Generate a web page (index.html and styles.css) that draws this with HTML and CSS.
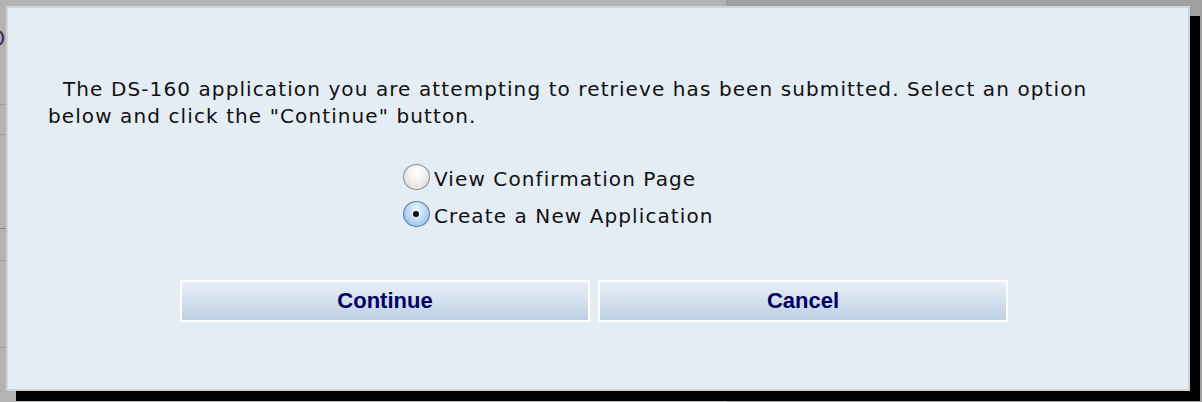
FILE: index.html
```html
<!DOCTYPE html>
<html>
<head>
<meta charset="utf-8">
<link rel="stylesheet" href="styles.css">
</head>
<body>
<div class="page">
  <div class="bg-glyph">O</div>
  <div class="bg-line l1"></div>
  <div class="bg-line l2"></div>
  <div class="bg-line l3"></div>
  <div class="bg-line l4"></div>
  <div class="bg-line l5"></div>
</div>
<div class="dialog">
  <p class="msg">The DS-160 application you are attempting to retrieve has been submitted. Select an option below and click the "Continue" button.</p>
  <div class="options">
    <label class="opt"><input type="radio" name="choice" class="radio"><span>View Confirmation Page</span></label>
    <label class="opt"><input type="radio" name="choice" class="radio" checked><span>Create a New Application</span></label>
  </div>
  <div class="buttons">
    <button class="btn">Continue</button>
    <button class="btn">Cancel</button>
  </div>
</div>
</body>
</html>
```
FILE: styles.css
```css
html, body {
  margin: 0;
  padding: 0;
}
body {
  width: 1202px;
  height: 402px;
  overflow: hidden;
  position: relative;
  background: linear-gradient(to right, #b3b3b3 0, #b3b3b3 726px, #a0a0a0 726px);
  font-family: "DejaVu Sans", Verdana, sans-serif;
}
.page {
  position: absolute;
  left: 0;
  top: 0;
  width: 1202px;
  height: 402px;
}
.bg-glyph {
  position: absolute;
  left: -12px;
  top: 26px;
  font-size: 22px;
  color: #3a3460;
  font-family: "DejaVu Sans", sans-serif;
}
.bg-line {
  position: absolute;
  left: 0;
  width: 6px;
  height: 1px;
  background: #9c9c9c;
}
.l1 { top: 104px; }
.l2 { top: 134px; }
.l3 { top: 228px; background: #888; }
.l4 { top: 260px; }
.l5 { top: 347px; }
.dialog {
  position: absolute;
  left: 6px;
  top: 6px;
  width: 1180px;
  height: 381px;
  border: 2px solid #d3d3d3;
  background: #e4ecf4;
  box-shadow: 10px 10px 0 #000;
}
.msg {
  margin: 0;
  padding: 68px 90px 0 40px;
  font-size: 20px;
  line-height: 27px;
  letter-spacing: 1.1px;
  color: #111;
  text-indent: 15px;
}
.options {
  display: flex;
  flex-direction: column;
  gap: 9px;
  padding: 35px 0 0 395px;
}
.opt {
  display: flex;
  align-items: center;
  height: 28px;
  font-size: 20px;
  letter-spacing: 1.1px;
  color: #111;
}
.radio {
  appearance: none;
  -webkit-appearance: none;
  margin: 0 4px 4px 0;
  width: 27px;
  height: 26px;
  border-radius: 50%;
  border: 1px solid #8e8e8e;
  background: radial-gradient(ellipse at 50% 25%, #ffffff 0, #f2f2f2 45%, #cfcfcf 100%);
  position: relative;
  box-sizing: border-box;
  flex: none;
}
.radio:checked {
  border-color: #5a7fa8;
  background: radial-gradient(ellipse at 50% 35%, #f2f8ff 0, #c4dcf6 45%, #7ab0e8 100%);
}
.radio:checked::after {
  content: "";
  position: absolute;
  left: 9px;
  top: 9px;
  width: 6px;
  height: 6px;
  border-radius: 50%;
  background: #111;
}
.buttons {
  display: flex;
  gap: 8px;
  padding: 50px 0 0 172px;
}
.btn {
  width: 410px;
  height: 42px;
  border: 2px solid #ffffff;
  background: linear-gradient(to bottom, #e6eef6 0, #d6e2ee 45%, #bccfe2 100%);
  font-family: "Liberation Sans", Arial, sans-serif;
  font-weight: bold;
  font-size: 22px;
  color: #000066;
  padding: 0;
  box-sizing: border-box;
}
```
